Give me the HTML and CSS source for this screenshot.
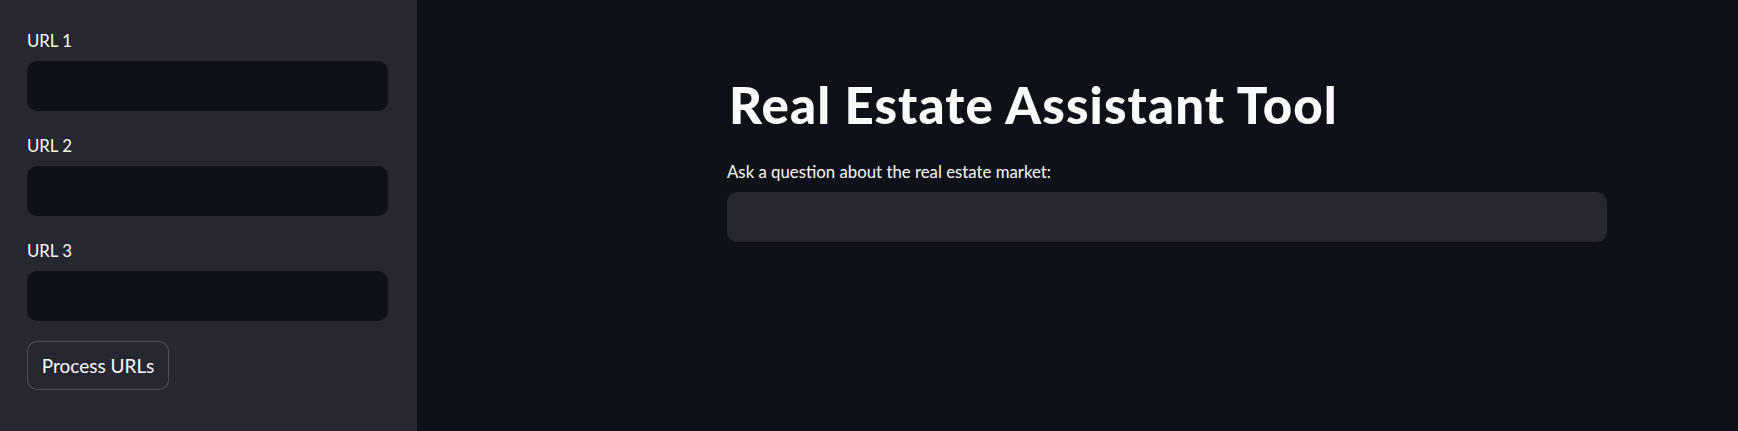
FILE: index.html
```html
<!DOCTYPE html>
<html lang="en">
<head>
<meta charset="utf-8">
<title>Real Estate Assistant Tool</title>
<link rel="stylesheet" href="styles.css">
</head>
<body>
<div class="app">
  <aside class="sidebar">
    <div class="field">
      <label class="label">URL 1</label>
      <div class="input input-dark"></div>
    </div>
    <div class="field">
      <label class="label">URL 2</label>
      <div class="input input-dark"></div>
    </div>
    <div class="field">
      <label class="label">URL 3</label>
      <div class="input input-dark"></div>
    </div>
    <button class="btn">Process URLs</button>
  </aside>
  <main class="main">
    <div class="content">
      <h1 class="title">Real Estate Assistant Tool</h1>
      <div class="field">
        <label class="label">Ask a question about the real estate market:</label>
        <div class="input input-light"></div>
      </div>
    </div>
  </main>
</div>
</body>
</html>
```
FILE: styles.css
```css
* { box-sizing: border-box; }
html, body {
  margin: 0;
  padding: 0;
  width: 1738px;
  height: 431px;
  overflow: hidden;
  background: #0e1117;
  font-family: Lato, "Open Sans", sans-serif;
  color: #fafafa;
}
.app {
  display: flex;
  height: 431px;
}
.sidebar {
  width: 417px;
  flex: none;
  background: #262730;
  padding: 30px 29px 0 27px;
  display: flex;
  flex-direction: column;
  gap: 24px;
}
.field {
  display: flex;
  flex-direction: column;
  gap: 10px;
}
.label {
  font-size: 16.8px;
  line-height: 21px;
  height: 21px;
  color: #fafafa;
}
.input {
  height: 50px;
  border-radius: 10px;
}
.input-dark { background: #0e1117; }
.input-light { background: #262730; }
.btn {
  margin-top: -4px;
  align-self: flex-start;
  width: 142px;
  height: 49px;
  background: #262730;
  color: #fafafa;
  border: 1px solid rgba(250, 250, 250, 0.2);
  border-radius: 10px;
  font-family: Lato, "Open Sans", sans-serif;
  font-size: 19px;
  padding: 0;
}
.main {
  flex: 1;
  padding: 75px 0 0 310px;
}
.content {
  width: 880px;
}
.title {
  margin: 0 0 27px 2px;
  font-size: 51px;
  line-height: 59px;
  letter-spacing: 1.1px;
  font-weight: 900;
  color: #fafafa;
}
```
